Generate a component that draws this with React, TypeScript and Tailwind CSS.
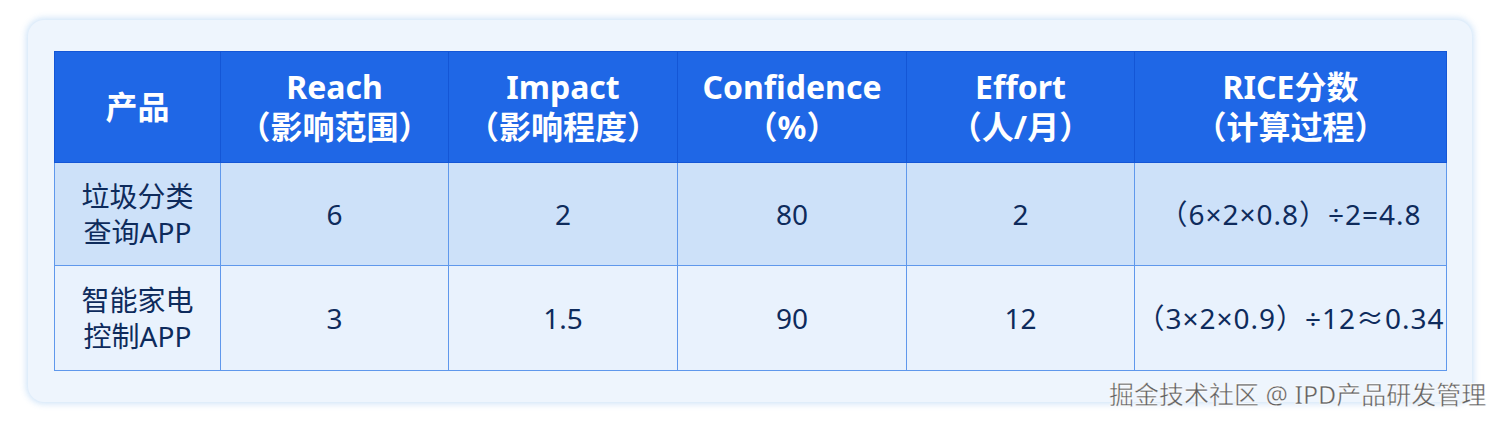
const headers: [string, string][] = [
  ['产品', ''],
  ['Reach', '（影响范围）'],
  ['Impact', '（影响程度）'],
  ['Confidence', '（%）'],
  ['Effort', '（人/月）'],
  ['RICE分数', '（计算过程）'],
];

const rows = [
  { name: ['垃圾分类', '查询APP'], cells: ['6', '2', '80', '2', '（6×2×0.8）÷2=4.8'], bg: 'bg-[#cde1f9]' },
  { name: ['智能家电', '控制APP'], cells: ['3', '1.5', '90', '12', '（3×2×0.9）÷12≈0.34'], bg: 'bg-[#e9f2fd]' },
];

const widths = ['w-[166px]', 'w-[228px]', 'w-[229px]', 'w-[229px]', 'w-[228px]', 'w-[312px]'];

export default function App() {
  return (
    <div
      className="relative h-[423px] w-[1500px] bg-white"
      style={{ fontFamily: '"Noto Sans", "Noto Sans CJK SC", sans-serif' }}
    >
      <div className="absolute left-[28px] top-[20px] h-[382px] w-[1444px] rounded-[16px] bg-[#eef5fd] px-[26px] pt-[31px] shadow-[0_0_6px_2px_rgba(150,195,240,0.45)]">
        <table className="w-[1392px] table-fixed border-collapse">
          <colgroup>
            {widths.map((w, i) => (
              <col key={i} className={w} />
            ))}
          </colgroup>
          <thead>
            <tr className="h-[111px] bg-[#1f67e6]">
              {headers.map(([a, b], i) => (
                <th
                  key={i}
                  className="border-[1.5px] border-[#1456d6] p-0 text-center align-middle text-[32px] font-bold leading-[40px] text-white"
                >
                  <div>{a}</div>
                  {b && <div>{b}</div>}
                </th>
              ))}
            </tr>
          </thead>
          <tbody>
            {rows.map((r, ri) => (
              <tr key={ri} className={`${ri === 0 ? 'h-[103px]' : 'h-[105px]'} ${r.bg}`}>
                <td className="border-[1.5px] border-[#5f98ec] p-0 text-center align-middle text-[28px] leading-[36px] text-[#0e2b5c]">
                  <div>{r.name[0]}</div>
                  <div>{r.name[1]}</div>
                </td>
                {r.cells.map((c, ci) => (
                  <td
                    key={ci}
                    className={`whitespace-nowrap border-[1.5px] border-[#5f98ec] p-0 text-center align-middle text-[28px] text-[#0e2b5c] ${ci === 4 ? 'tracking-[1px]' : ''}`}
                  >
                    {c}
                  </td>
                ))}
              </tr>
            ))}
          </tbody>
        </table>
      </div>
      <div
        className="absolute left-[1109px] top-[378px] whitespace-nowrap text-[25px] leading-[32px] text-[#606060]"
        style={{ WebkitTextStroke: '0.4px #ffffff', textShadow: '0 0 2px #fff, 0 0 2px #fff' }}
      >
        掘金技术社区 @ IPD产品研发管理
      </div>
    </div>
  );
}
